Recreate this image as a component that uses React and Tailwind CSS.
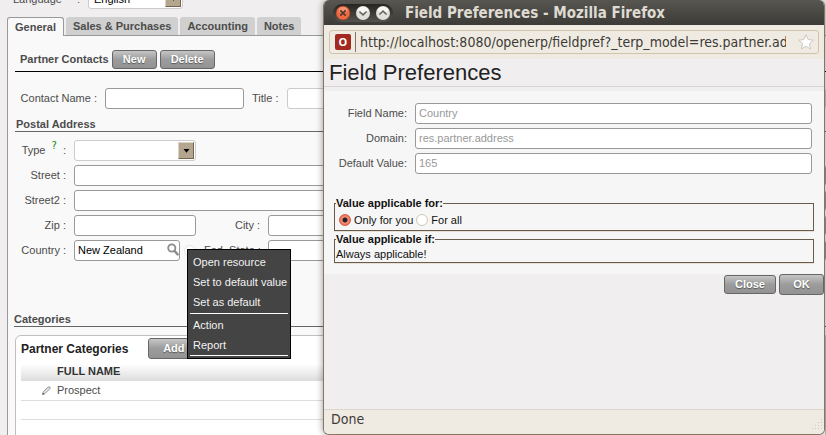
import React from "react";

const inputBase =
  "block h-[21px] w-full min-w-0 rounded-[3px] border border-[#999999] bg-white px-[3px] pb-0.5 text-[11px] outline-none";

const greyButton =
  "rounded-[3px] border border-[#666666] bg-linear-to-b from-[#c6c6c6] via-[#9c9c9c] to-[#939393] pb-0.5 leading-[14px] font-bold text-white [text-shadow:0_1px_1px_#555555]";

function ArrowBox() {
  return (
    <span className="pointer-events-none absolute top-0.5 right-0.5 flex h-[17px] w-4 items-center justify-center border border-t-[#ddd3c4] border-r-[#75654f] border-b-[#75654f] border-l-[#ddd3c4] bg-[#b4a58f]">
      <svg width="7" height="4" viewBox="0 0 7 4">
        <path d="M0.5 0h6L3.5 3.8z" fill="#000" />
      </svg>
    </span>
  );
}

function DropDown({ id, children, className = "" }) {
  return (
    <div className={"relative " + className}>
      <select
        id={id}
        className="block h-[21px] w-full appearance-none rounded-[3px] border border-[#cccccc] bg-white px-[5px] text-[11px] text-black outline-none"
      >
        {children}
      </select>
      <ArrowBox />
    </div>
  );
}

function Label({ htmlFor, children }) {
  return (
    <label htmlFor={htmlFor} className="pb-0.5 text-right whitespace-nowrap">
      {children}
    </label>
  );
}

function Tab({ children, active }) {
  return active ? (
    <button className="-mb-px h-[19px] rounded-t-[3px] border border-b-0 border-[#999999] bg-[#f9f9f9] px-[7px] font-bold">
      {children}
    </button>
  ) : (
    <button className="h-[18px] rounded-t-[3px] bg-[#d0d0d0] px-[7px] font-bold">{children}</button>
  );
}

function ContextMenu() {
  const item = "block w-full px-[3px] text-left leading-5 text-[#f2f2f2]";
  return (
    <div className="absolute top-[9px] left-[113px] z-10 w-[104px] border border-black bg-[#444444] px-0.5 pt-0.5 pb-0.5 whitespace-nowrap">
      <button className={item}>Open resource</button>
      <button className={item}>Set to default value</button>
      <button className={item}>Set as default</button>
      <hr className="mt-px mb-px border-white" />
      <button className={item}>Action</button>
      <button className={item}>Report</button>
      <hr className="border-white" />
    </div>
  );
}

function PartnerForm() {
  return (
    <main className="min-h-screen pl-[7px]">
      <div className="-mt-3 mb-2 flex h-[21px] items-center">
        <label htmlFor="language" className="w-[81px] pl-1.5">
          Language <span className="pl-3">:</span>
        </label>
        <DropDown id="language" className="w-[95px]">
          <option>English</option>
        </DropDown>
      </div>

      <nav className="flex items-start gap-0.5">
        <Tab active>General</Tab>
        <Tab>Sales &amp; Purchases</Tab>
        <Tab>Accounting</Tab>
        <Tab>Notes</Tab>
      </nav>

      <div className="min-h-[400px] border-t border-l border-[#999999] bg-[#f9f9f9] pt-3.5">
        <div className="ml-[7px] flex h-[22px] items-start gap-[3px] border-b border-black pl-[5px]">
          <h2 className="leading-[18px] font-bold">Partner Contacts</h2>
          <button className={greyButton + " h-[19px] w-[45px]"}>New</button>
          <button className={greyButton + " h-[19px] w-[55px]"}>Delete</button>
        </div>

        <div className="mt-4 flex items-center gap-2">
          <label htmlFor="contact" className="w-[89px] pb-0.5 text-right whitespace-nowrap">
            Contact Name :
          </label>
          <input id="contact" className={inputBase + " max-w-[139px]"} />
          <Label htmlFor="title">Title :</Label>
          <DropDown id="title" className="flex-1">
            <option></option>
          </DropDown>
        </div>

        <h3 className="mt-2 ml-[7px] border-b border-[#666666] pl-px leading-[14px] font-bold">
          Postal Address
        </h3>

        <div className="mt-2 grid grid-cols-[58px_122px_56px_1fr] items-center gap-x-2 gap-y-1">
          <Label htmlFor="type">
            Type{" "}
            <sup className="px-[3px] font-['DejaVu_Sans'] text-[10px] text-[#118811]">?</sup> :
          </Label>
          <DropDown id="type">
            <option></option>
          </DropDown>
          <span className="col-span-2" />

          <Label htmlFor="street">Street :</Label>
          <div className="col-span-3">
            <input id="street" className={inputBase} />
          </div>

          <Label htmlFor="street2">Street2 :</Label>
          <div className="col-span-3">
            <input id="street2" className={inputBase} />
          </div>

          <Label htmlFor="zip">Zip :</Label>
          <input id="zip" className={inputBase} />
          <Label htmlFor="city">City :</Label>
          <input id="city" className={inputBase} />

          <Label htmlFor="country">Country :</Label>
          <div className="relative flex items-center gap-1">
            <div className="relative w-[106px] shrink-0">
              <input id="country" defaultValue="New Zealand" className={inputBase + " text-black"} />
              <svg
                className="absolute top-[3px] right-px"
                width="12"
                height="13"
                viewBox="0 0 12 13"
                fill="none"
                stroke="#8c8c8c"
              >
                <circle cx="4.8" cy="5" r="3.6" strokeWidth="1.8" />
                <path d="M7.6 8l3 3.4" strokeWidth="2.4" strokeLinecap="round" />
              </svg>
            </div>
            <span className="h-3 w-3 rounded-full border border-[#e4e4e4] bg-white" />
            <ContextMenu />
          </div>
          <Label htmlFor="state">Fed. State :</Label>
          <input id="state" className={inputBase} />
        </div>

        <h3 className="mt-[51px] ml-1.5 border-b border-[#666666] leading-[14px] font-bold">
          Categories
        </h3>

        <section className="mt-2 ml-[7px] min-h-[120px] rounded-tl-md border border-[#bfbfbf] bg-white pt-0.5 pl-[5px]">
          <div className="flex items-center gap-5">
            <h2 className="text-[12px] font-bold text-[#222222]">Partner Categories</h2>
            <button className={greyButton + " h-[21px] w-[51px]"}>Add</button>
          </div>
          <table className="mt-[5px] w-full border-collapse text-left">
            <thead>
              <tr className="h-[17px] bg-linear-to-b from-white to-[#dddddd] text-[#333333]">
                <th className="w-9 p-0" aria-label="Edit" />
                <th className="p-0 pb-[3px] leading-[14px] font-bold">FULL NAME</th>
              </tr>
            </thead>
            <tbody>
              <tr className="h-[19px] border-b border-[#dddddd]">
                <td className="p-0">
                  <svg
                    className="ml-[21px]"
                    width="9"
                    height="9"
                    viewBox="0 0 9 9"
                    fill="#e8e8e8"
                    stroke="#777777"
                    strokeWidth="0.8"
                  >
                    <path d="M0.6 8.4L1.3 6L6.2 1Q7 0.3 7.8 1.1Q8.5 1.9 7.8 2.7L3 7.6z" />
                    <path d="M0.6 8.4l1.4-.4-.9-.9z" fill="#444444" />
                  </svg>
                </td>
                <td className="p-0 leading-4">Prospect</td>
              </tr>
              <tr className="h-[19px] border-b border-[#dddddd]">
                <td className="p-0" />
                <td className="p-0" />
              </tr>
            </tbody>
          </table>
        </section>
      </div>
    </main>
  );
}

function WindowButtons() {
  return (
    <div className="flex h-[18px] items-center gap-1 rounded-full bg-linear-to-b from-[#262522] to-[#55534d] px-0.5">
      <button aria-label="Close window">
        <svg width="16" height="16" viewBox="0 0 16 16">
          <circle cx="8" cy="8" r="7" fill="#ee6a42" stroke="#8a3a22" strokeWidth="0.6" />
          <ellipse cx="8" cy="5" rx="4.6" ry="3" fill="#f8a381" opacity="0.7" />
          <path d="M5.3 5.3l5.4 5.4M10.7 5.3l-5.4 5.4" stroke="#54392f" strokeWidth="1.7" />
        </svg>
      </button>
      <button aria-label="Minimize window">
        <svg width="16" height="16" viewBox="0 0 16 16">
          <circle cx="8" cy="8" r="7" fill="#e2e0db" />
          <ellipse cx="8" cy="5" rx="5" ry="3.2" fill="#f8f7f5" />
          <path d="M4.4 6.5L8 9.8l3.6-3.3" fill="none" stroke="#66645e" strokeWidth="1.6" />
        </svg>
      </button>
      <button aria-label="Maximize window">
        <svg width="16" height="16" viewBox="0 0 16 16">
          <circle cx="8" cy="8" r="7" fill="#e2e0db" />
          <ellipse cx="8" cy="5" rx="5" ry="3.2" fill="#f8f7f5" />
          <path d="M4.4 9.5L8 6.2l3.6 3.3" fill="none" stroke="#66645e" strokeWidth="1.6" />
        </svg>
      </button>
    </div>
  );
}

function PreferenceRow({ id, label, value }) {
  return (
    <>
      <Label htmlFor={id}>{label}</Label>
      <input id={id} defaultValue={value} readOnly className={inputBase + " text-[#999999]"} />
    </>
  );
}

function PreferencesWindow() {
  const group = "mx-2.5 border border-[#6a5c4c] px-px text-[#111111] [box-shadow:0_1px_0_#e8e0d4]";
  return (
    <div
      role="dialog"
      aria-label="Field Preferences"
      className="absolute inset-y-0 right-px left-[323px] z-20 flex flex-col overflow-hidden rounded-md border-x border-b border-[#857660] bg-[#f0eeee] shadow-[0_0_7px_#00000066]"
    >
      <header className="flex h-[25px] shrink-0 items-center gap-3 bg-linear-to-b from-[#575651] to-[#3c3b37] pl-[9px]">
        <WindowButtons />
        <h1 className="font-['DejaVu_Sans_Condensed','DejaVu_Sans'] text-[15px] font-bold whitespace-nowrap text-[#dfdbd2]">
          Field Preferences - Mozilla Firefox
        </h1>
      </header>

      <div className="shrink-0 bg-[#f0ebe2] px-[5px] py-[5px]">
        <div className="flex h-6 items-center rounded-[3px] border border-[#cfc3ab] pr-1 pl-[5px]">
          <span className="flex h-4 w-4 shrink-0 items-center justify-center rounded-[2px] bg-[#a32920] font-['Open_Sans'] text-[11px] leading-4 font-bold text-white">
            O
          </span>
          <span className="mx-1 h-5 w-px shrink-0 bg-[#857660]" />
          <input
            aria-label="Address"
            readOnly
            defaultValue="http://localhost:8080/openerp/fieldpref?_terp_model=res.partner.address"
            className="min-w-0 flex-1 bg-transparent font-['DejaVu_Sans_Condensed','DejaVu_Sans'] text-[14px] text-[#3c3b37] outline-none"
          />
          <svg className="ml-3 shrink-0" width="16" height="16" viewBox="0 0 16 16">
            <path
              d="M8 0.8l2.2 4.8 5.1.5-3.8 3.5 1 5.3L8 12.3l-4.5 2.6 1-5.3L.7 6.1l5.1-.5z"
              fill="#fff"
              stroke="#cbc6bd"
              strokeLinejoin="round"
            />
          </svg>
        </div>
      </div>

      <h2 className="h-7 shrink-0 border-b border-[#d6d4d4] pl-[5px] text-[22px] leading-[27px] text-[#222222]">
        Field Preferences
      </h2>

      <div className="mt-1 bg-[#f6f6f6] pt-3 pb-[11px]">
        <div className="mr-3 grid grid-cols-[83px_1fr] items-center gap-x-2 gap-y-1">
          <PreferenceRow id="pref-field" label="Field Name:" value="Country" />
          <PreferenceRow id="pref-domain" label="Domain:" value="res.partner.address" />
          <PreferenceRow id="pref-value" label="Default Value:" value="165" />
        </div>
        <fieldset className={group + " mt-[22px]"}>
          <legend className="leading-[14px] font-bold">Value applicable for:</legend>
          <div className="flex h-5 items-center gap-[3px] pl-[3px]">
            <input
              id="only-you"
              type="radio"
              name="scope"
              defaultChecked
              className="h-3 w-3 appearance-none rounded-full border border-[#d8604a] bg-[#f4907c] checked:bg-[radial-gradient(circle,#222222_0_2px,#f4907c_3px,#ee5a44_6px)]"
            />
            <label htmlFor="only-you">Only for you</label>
            <input
              id="for-all"
              type="radio"
              name="scope"
              className="h-3 w-3 appearance-none rounded-full border border-[#cfc6b8] bg-white checked:bg-[#f4907c]"
            />
            <label htmlFor="for-all">For all</label>
          </div>
        </fieldset>
        <fieldset className={group + " mt-px"}>
          <legend className="leading-[14px] font-bold">Value applicable if:</legend>
          <p className="leading-4">Always applicable!</p>
        </fieldset>
      </div>

      <div className="flex items-center justify-end gap-[3px]">
        <button className={greyButton + " h-[19px] w-[52px]"}>Close</button>
        <button className={greyButton + " h-[21px] w-[45px]"}>OK</button>
      </div>

      <footer className="mt-auto flex h-[25px] shrink-0 items-start justify-between border-t border-[#dcd6cc] bg-[#f0ebe2] pl-[7px]">
        <span className="font-['DejaVu_Sans_Condensed','DejaVu_Sans'] text-[14px] leading-[18px] text-[#3c3b37]">
          Done
        </span>
        <svg className="mt-2 mr-px" width="12" height="12" viewBox="0 0 12 12" fill="#cfc8bb">
          <path d="M10 1h1v1h-1zM7 4h1v1h-1zM10 4h1v1h-1zM4 7h1v1h-1zM7 7h1v1h-1zM10 7h1v1h-1zM1 10h1v1h-1zM4 10h1v1h-1zM7 10h1v1h-1zM10 10h1v1h-1z" />
        </svg>
      </footer>
    </div>
  );
}

export default function App() {
  return (
    <div className="relative h-screen overflow-hidden bg-[#f0eeee] font-['Liberation_Sans',Arial,sans-serif] text-[11px] leading-4 text-[#4c4c4c]">
      <PartnerForm />
      <PreferencesWindow />
    </div>
  );
}
